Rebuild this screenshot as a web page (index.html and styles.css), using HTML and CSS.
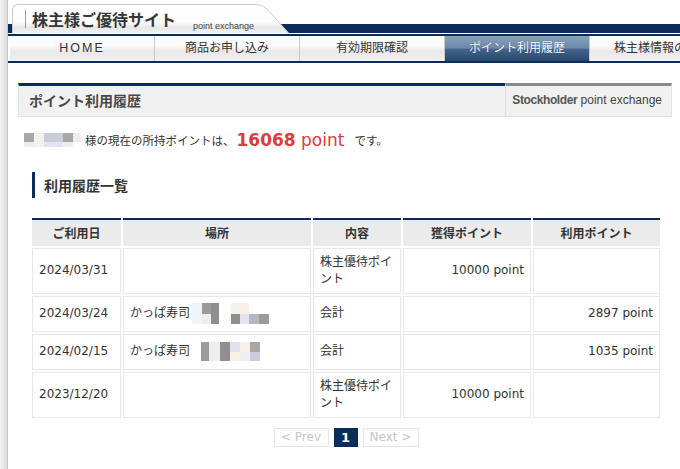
FILE: index.html
```html
<!DOCTYPE html>
<html lang="ja">
<head>
<meta charset="utf-8">
<title>ポイント利用履歴</title>
<link rel="stylesheet" href="styles.css">
</head>
<body>
<div class="frame">
  <div class="edge"></div>
  <div class="main">
    <header class="site-header">
      <div class="tab">
        <svg class="tab-shape" width="280" height="29" viewBox="0 0 280 29">
          <defs>
            <linearGradient id="tabfill" x1="0" y1="0" x2="0" y2="1">
              <stop offset="0" stop-color="#ffffff"/>
              <stop offset="0.6" stop-color="#fdfdfd"/>
              <stop offset="0.8" stop-color="#e7e7e7"/>
              <stop offset="1" stop-color="#f2f2f2"/>
            </linearGradient>
          </defs>
          <path d="M0.5,29.5 V6.5 Q0.5,0.5 6.5,0.5 H243 Q251,0.5 256,6 L277,29.5 Z" fill="url(#tabfill)" stroke="#cacaca"/>
        </svg>
        <span class="tab-sep"></span>
        <span class="site-title">株主様ご優待サイト</span>
        <span class="site-sub">point exchange</span>
      </div>
    </header>
    <nav class="gnav">
      <a class="nav-item nav-home">HOME</a>
      <a class="nav-item">商品お申し込み</a>
      <a class="nav-item">有効期限確認</a>
      <a class="nav-item is-active">ポイント利用履歴</a>
      <a class="nav-item">株主様情報の変更</a>
    </nav>

    <main class="content">
      <div class="sec-head">
        <h2 class="sec-title">ポイント利用履歴</h2>
        <div class="sec-brand"><b>Stockholder</b> point exchange</div>
      </div>

      <p class="balance"><span class="mosaic mz-name"><i class="k3"></i><i class="k8"></i><i class="k5"></i><i class="k3"></i><i class="k7"></i><i class="k7"></i><i class="k8"></i><i class="k6"></i><i class="k7"></i><i></i></span><span class="jp">様の現在の所持ポイントは、</span><span class="pt-num">16068</span><span class="pt-unit"> point</span><span class="jp desu">です。</span></p>

      <h3 class="list-title">利用履歴一覧</h3>

      <table class="hist">
        <thead>
          <tr>
            <th class="w1">ご利用日</th>
            <th class="w2">場所</th>
            <th class="w3">内容</th>
            <th class="w4">獲得ポイント</th>
            <th class="w5">利用ポイント</th>
          </tr>
        </thead>
        <tbody>
          <tr>
            <td>2024/03/31</td>
            <td></td>
            <td>株主優待ポイント</td>
            <td class="num">10000 point</td>
            <td class="num"></td>
          </tr>
          <tr>
            <td>2024/03/24</td>
            <td>かっぱ寿司<span class="mosaic mz-a"><i class="k9"></i><i class="k2"></i><i class="k1"></i><i></i><i class="k8"></i><i class="k8"></i><i></i><i></i><i class="k9"></i><i class="k7"></i><i class="k1"></i><i></i><i class="k1"></i><i class="k6"></i><i class="k4"></i><i class="k2"></i></span></td>
            <td>会計</td>
            <td class="num"></td>
            <td class="num">2897 point</td>
          </tr>
          <tr>
            <td>2024/02/15</td>
            <td>かっぱ寿司<span class="mosaic mz-b"><i></i><i class="k2"></i><i class="k7"></i><i class="k1"></i><i class="k6"></i><i class="k8"></i><i class="k3"></i><i></i><i class="k2"></i><i class="k7"></i><i class="k1"></i><i class="k8"></i><i class="k7"></i><i class="k5"></i></span></td>
            <td>会計</td>
            <td class="num"></td>
            <td class="num">1035 point</td>
          </tr>
          <tr>
            <td>2023/12/20</td>
            <td></td>
            <td>株主優待ポイント</td>
            <td class="num">10000 point</td>
            <td class="num"></td>
          </tr>
        </tbody>
      </table>

      <div class="pager">
        <span class="pg pg-prev">&lt; Prev</span>
        <span class="pg pg-cur">1</span>
        <span class="pg pg-next">Next &gt;</span>
      </div>
    </main>
  </div>
</div>
</body>
</html>
```
FILE: styles.css
```css
* { box-sizing: border-box; }

body {
  margin: 0;
  background: #fff;
  color: #333;
  font-family: "DejaVu Sans", "Noto Sans CJK JP", sans-serif;
}

.frame {
  display: flex;
  width: 680px;
  min-height: 469px;
  overflow: hidden;
}

.edge {
  flex: none;
  width: 8px;
  background: linear-gradient(to right, #f4f4f4, #dedede);
  border-right: 1px solid #c6c6c6;
}

.main {
  flex: 1;
  min-width: 0;
  overflow: hidden;
}

/* header */
.site-header {
  height: 36px;
  padding: 4px 0 0 4px;
  background: linear-gradient(to bottom,
    #fff 0, #fff 24px,
    #0c2c5c 24px, #0c2c5c 33px,
    #fff 33px, #fff 34px,
    #0c2c5c 34px, #0c2c5c 36px);
}

.tab {
  position: relative;
  width: 280px;
  height: 29px;
  display: flex;
  align-items: flex-start;
  padding: 6px 0 0 13px;
  font-family: "Noto Sans CJK JP", sans-serif;
}

.tab-shape {
  position: absolute;
  left: 0;
  top: 0;
}

.tab > span { position: relative; }

.tab-sep {
  width: 1px;
  height: 18px;
  background: #9c9c9c;
  margin-right: 6px;
}

.site-title {
  font-size: 16px;
  font-weight: 700;
  line-height: 20px;
  margin-top: -1px;
  color: #363636;
}

.site-sub {
  font-family: "Liberation Sans", Arial, sans-serif;
  font-size: 9px;
  line-height: 10px;
  margin: 11px 0 0 17px;
  color: #444;
}

/* global nav */
.gnav {
  display: flex;
  padding-left: 2px;
  height: 27px;
  border-bottom: 2px solid #0c2c5c;
}

.nav-item {
  flex: none;
  width: 145px;
  height: 25px;
  border-right: 1px solid #c9c9c9;
  background: linear-gradient(to bottom, #ffffff 0%, #fafafa 40%, #e8e8e8 62%, #f1f1f1 100%);
  font-family: "Liberation Sans", "Noto Sans CJK JP", sans-serif;
  font-size: 12px;
  line-height: 25px;
  text-align: center;
  color: #333;
  white-space: nowrap;
}

.nav-home {
  letter-spacing: 2px;
  font-size: 12.5px;
}

.nav-item.is-active {
  background: linear-gradient(to bottom, #8aa1bf 0%, #6d88ab 48%, #44638d 54%, #28476f 100%);
  color: #fff;
  text-shadow: 0 0 1px #1c3a60;
}

/* content */
.content {
  display: block;
  padding: 20px 8px 0 10px;
}

.sec-head {
  display: flex;
  height: 34px;
}

.sec-title {
  flex: 1;
  margin: 0;
  border-top: 3px solid #0c2c5c;
  border-left: 1px solid #e3e3e3;
  border-bottom: 1px solid #e3e3e3;
  background: #f1f1f1;
  padding-left: 10px;
  font-family: "Noto Sans CJK JP", sans-serif;
  font-size: 14px;
  font-weight: 700;
  line-height: 29px;
  color: #484848;
}

.sec-brand {
  flex: none;
  width: 167px;
  border-top: 3px solid #8a8a8a;
  border-left: 1px solid #dcdcdc;
  border-right: 1px solid #e3e3e3;
  border-bottom: 1px solid #e3e3e3;
  background: #f1f1f1;
  padding-right: 9px;
  font-family: "Liberation Sans", Arial, sans-serif;
  font-size: 12px;
  line-height: 29px;
  text-align: right;
  color: #444;
}

.sec-brand b {
  color: #555;
  letter-spacing: -0.4px;
}

.balance {
  margin: 11px 0 0 6px;
  line-height: 22px;
  font-size: 11.5px;
  color: #333;
}

.balance span { line-height: 22px; vertical-align: middle; }

.jp { font-family: "Noto Sans CJK JP", sans-serif; }

.pt-num {
  margin-left: 2px;
  font-size: 17px;
  font-weight: 700;
  color: #e03a3a;
}

.pt-unit {
  font-size: 17px;
  color: #e03a3a;
}

.desu { margin-left: 10px; }

/* mosaics (blurred names) */
.mosaic {
  display: inline-grid;
  vertical-align: middle;
}

.mosaic i { display: block; }

.mz-name {
  grid-template-columns: 10px 10px 19px 10px 8px;
  grid-template-rows: 9px 5px;
  margin-right: 4px;
}

.mz-a {
  grid-template-columns: 10px 9px 8px 12px 9px 9px 10px 10px;
  grid-template-rows: 11px 10px;
  margin-left: 2px;
}

.mz-b {
  grid-template-columns: 9px 8px 11px 10px 10px 10px 10px;
  grid-template-rows: 10px 9px;
  margin-left: 2px;
}

.k1 { background: #8f8f8f; }
.k2 { background: #9e9a9c; }
.k3 { background: #a7a7a7; }
.k4 { background: #b4b7c3; }
.k5 { background: #c9cdd8; }
.k6 { background: #e2e3ec; }
.k7 { background: #eeeeee; }
.k8 { background: #f6f2ea; }
.k9 { background: #eef6f8; }

.list-title {
  margin: 21px 0 0 14px;
  border-left: 3px solid #0c2c5c;
  padding-left: 9px;
  font-family: "Noto Sans CJK JP", sans-serif;
  font-size: 14px;
  font-weight: 700;
  line-height: 26px;
  color: #333;
}

/* table */
.hist {
  margin: 18px 0 0 12px;
  width: 632px;
  table-layout: fixed;
  border-collapse: separate;
  border-spacing: 2px;
  font-size: 12px;
  color: #333;
}

.hist th {
  background: #ebebeb;
  border-top: 2px solid #0c2c5c;
  padding: 4px 6px;
  line-height: 18px;
  font-family: "Noto Sans CJK JP", sans-serif;
  font-weight: 700;
  text-align: center;
  color: #333;
}

.w1 { width: 89px; }
.w2 { width: 188px; }
.w3 { width: 88px; }
.w4 { width: 128px; }
.w5 { width: 127px; }

.hist td {
  border: 1px solid #e8e8e8;
  padding: 5px 6px;
  height: 36px;
  line-height: 17px;
  vertical-align: middle;
  text-align: left;
}

.hist td.num { text-align: right; }

/* pager */
.pager {
  display: flex;
  justify-content: center;
  gap: 5px;
  width: 632px;
  margin: 8px 0 0 12px;
}

.pg {
  height: 19px;
  border: 1px solid #e6e6e6;
  font-size: 12px;
  line-height: 17px;
  text-align: center;
  color: #c6c6c6;
}

.pg-prev { width: 55px; }
.pg-next { width: 56px; }

.pg-cur {
  width: 24px;
  background: #0c2c5c;
  border-color: #0c2c5c;
  color: #fff;
  font-weight: 700;
  font-size: 13px;
}
```
